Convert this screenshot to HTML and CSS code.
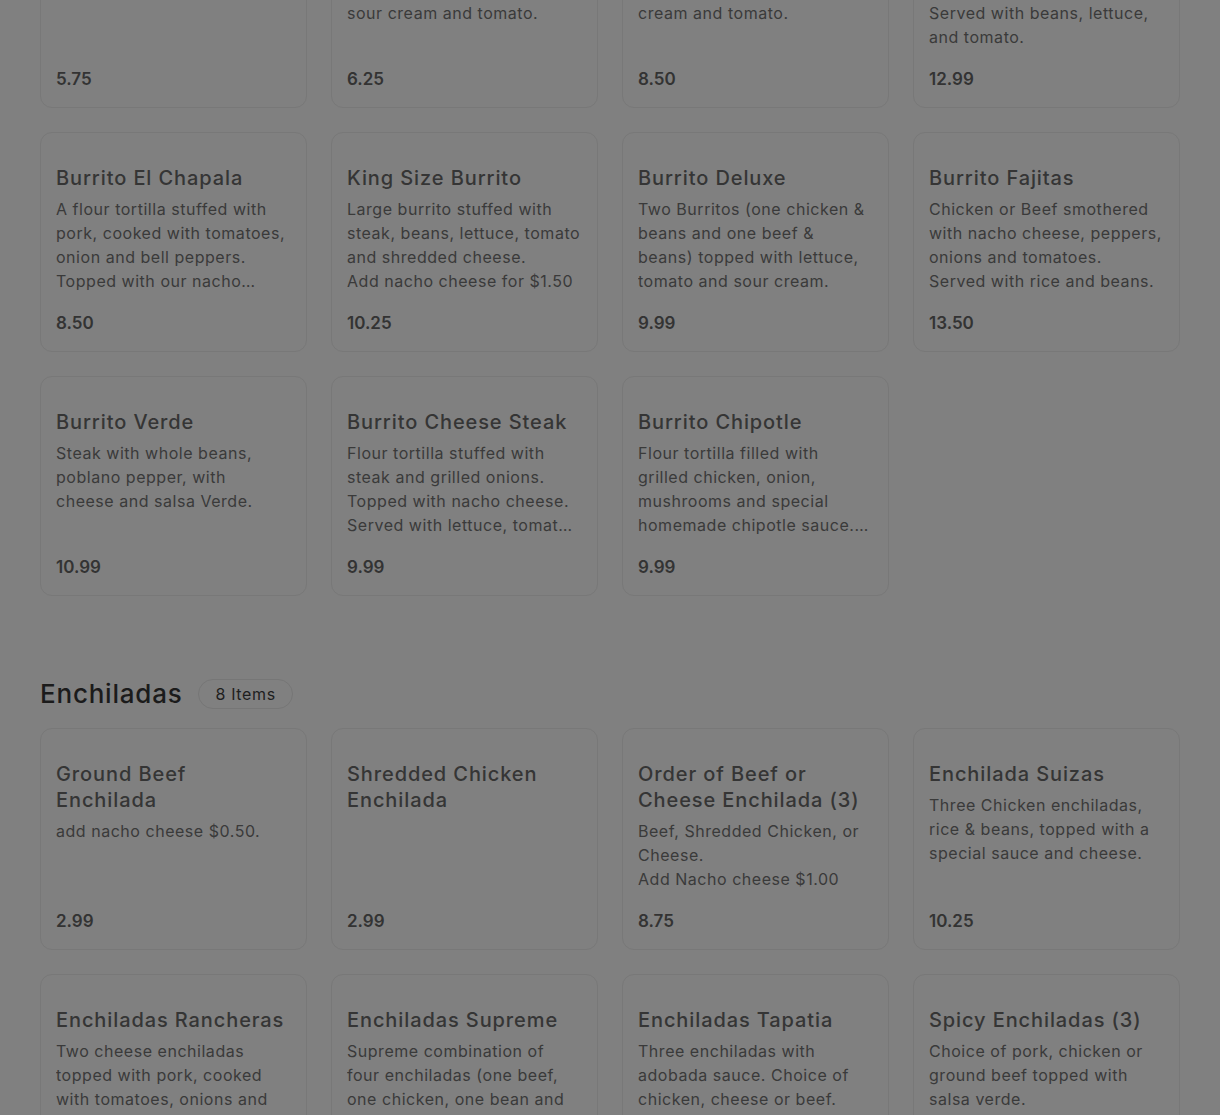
FILE: index.html
```html
<!DOCTYPE html>
<html lang="en">
<head>
<meta charset="utf-8">
<title>Menu</title>
<link rel="stylesheet" href="styles.css">
</head>
<body>
<main class="menu">
  <section class="section section-first">
    <div class="grid">
      <article class="card">
        <div class="card-body">
          <h3 class="item-title">Bean Burrito</h3>
          <p class="item-desc">Flour tortilla filled with<br>refried beans and cheese.</p>
        </div>
        <div class="item-price">5.75</div>
      </article>
      <article class="card">
        <div class="card-body">
          <h3 class="item-title">Burrito Supreme</h3>
          <p class="item-desc">Beef burrito topped with<br>cheese sauce, lettuce,<br>sour cream and tomato.</p>
        </div>
        <div class="item-price">6.25</div>
      </article>
      <article class="card">
        <div class="card-body">
          <h3 class="item-title">Burrito Mexicano</h3>
          <p class="item-desc">Steak burrito topped with<br>cheese sauce, lettuce, sour<br>cream and tomato.</p>
        </div>
        <div class="item-price">8.50</div>
      </article>
      <article class="card">
        <div class="card-body">
          <h3 class="item-title">Burrito Grande</h3>
          <p class="item-desc">Big burrito stuffed with<br>steak, chicken and rice.<br>Served with beans, lettuce,<br>and tomato.</p>
        </div>
        <div class="item-price">12.99</div>
      </article>

      <article class="card">
        <div class="card-body">
          <h3 class="item-title">Burrito El Chapala</h3>
          <p class="item-desc">A flour tortilla stuffed with pork, cooked with tomatoes, onion and bell peppers. Topped with our nacho cheese and served with rice.</p>
        </div>
        <div class="item-price">8.50</div>
      </article>
      <article class="card">
        <div class="card-body">
          <h3 class="item-title">King Size Burrito</h3>
          <p class="item-desc">Large burrito stuffed with steak, beans, lettuce, tomato and shredded cheese.<br>Add nacho cheese for $1.50</p>
        </div>
        <div class="item-price">10.25</div>
      </article>
      <article class="card">
        <div class="card-body">
          <h3 class="item-title">Burrito Deluxe</h3>
          <p class="item-desc">Two Burritos (one chicken &amp; beans and one beef &amp; beans) topped with lettuce, tomato and sour cream.</p>
        </div>
        <div class="item-price">9.99</div>
      </article>
      <article class="card">
        <div class="card-body">
          <h3 class="item-title">Burrito Fajitas</h3>
          <p class="item-desc">Chicken or Beef smothered with nacho cheese, peppers, onions and tomatoes.<br>Served with rice and beans.</p>
        </div>
        <div class="item-price">13.50</div>
      </article>

      <article class="card">
        <div class="card-body">
          <h3 class="item-title">Burrito Verde</h3>
          <p class="item-desc">Steak with whole beans, poblano pepper, with<br>cheese and salsa Verde.</p>
        </div>
        <div class="item-price">10.99</div>
      </article>
      <article class="card">
        <div class="card-body">
          <h3 class="item-title">Burrito Cheese Steak</h3>
          <p class="item-desc">Flour tortilla stuffed with steak and grilled onions. Topped with nacho cheese. Served with lettuce, tomato and sour cream.</p>
        </div>
        <div class="item-price">9.99</div>
      </article>
      <article class="card">
        <div class="card-body">
          <h3 class="item-title">Burrito Chipotle</h3>
          <p class="item-desc">Flour tortilla filled with grilled chicken, onion, mushrooms and special homemade chipotle sauce. Topped with nacho cheese.</p>
        </div>
        <div class="item-price">9.99</div>
      </article>
    </div>
  </section>

  <section class="section">
    <header class="section-head">
      <h2 class="section-title">Enchiladas</h2>
      <span class="count-badge">8 Items</span>
    </header>
    <div class="grid">
      <article class="card">
        <div class="card-body">
          <h3 class="item-title">Ground Beef Enchilada</h3>
          <p class="item-desc clamp-3">add nacho cheese $0.50.</p>
        </div>
        <div class="item-price">2.99</div>
      </article>
      <article class="card">
        <div class="card-body">
          <h3 class="item-title">Shredded Chicken Enchilada</h3>
        </div>
        <div class="item-price">2.99</div>
      </article>
      <article class="card">
        <div class="card-body">
          <h3 class="item-title">Order of Beef or Cheese Enchilada (3)</h3>
          <p class="item-desc clamp-3">Beef, Shredded Chicken, or Cheese.<br>Add Nacho cheese $1.00</p>
        </div>
        <div class="item-price">8.75</div>
      </article>
      <article class="card">
        <div class="card-body">
          <h3 class="item-title">Enchilada Suizas</h3>
          <p class="item-desc">Three Chicken enchiladas, rice &amp; beans, topped with a special sauce and cheese.</p>
        </div>
        <div class="item-price">10.25</div>
      </article>

      <article class="card">
        <div class="card-body">
          <h3 class="item-title">Enchiladas Rancheras</h3>
          <p class="item-desc">Two cheese enchiladas topped with pork, cooked with tomatoes, onions and bell peppers. Served with rice and beans.</p>
        </div>
        <div class="item-price">10.99</div>
      </article>
      <article class="card">
        <div class="card-body">
          <h3 class="item-title">Enchiladas Supreme</h3>
          <p class="item-desc">Supreme combination of<br>four enchiladas (one beef, one chicken, one bean and one cheese) topped with lettuce.</p>
        </div>
        <div class="item-price">10.50</div>
      </article>
      <article class="card">
        <div class="card-body">
          <h3 class="item-title">Enchiladas Tapatia</h3>
          <p class="item-desc">Three enchiladas with adobada sauce. Choice of chicken, cheese or beef.</p>
        </div>
        <div class="item-price">11.25</div>
      </article>
      <article class="card">
        <div class="card-body">
          <h3 class="item-title">Spicy Enchiladas (3)</h3>
          <p class="item-desc">Choice of pork, chicken or ground beef topped with salsa verde.</p>
        </div>
        <div class="item-price">10.99</div>
      </article>
    </div>
  </section>
</main>
</body>
</html>
```

FILE: styles.css
```css
html {
  overflow: hidden;
  background: #808080;
}

body {
  margin: 0;
  background: #808080;
  font-family: Inter, "Open Sans", "Liberation Sans", sans-serif;
  color: #383838;
}

.menu {
  padding: 0 40px;
}

.section-first {
  margin-top: -112px;
}

.section + .section {
  margin-top: 83px;
}

.section-head {
  display: flex;
  align-items: center;
  gap: 16px;
  height: 30px;
  margin-bottom: 19px;
}

.section-title {
  margin: 0;
  font-size: 26px;
  font-weight: 500;
  letter-spacing: 0.03em;
  color: #1b1b1b;
  line-height: 30px;
}

.count-badge {
  display: inline-flex;
  align-items: center;
  height: 28px;
  padding: 0 16px;
  border: 1px solid #767676;
  border-radius: 15px;
  font-size: 16px;
  letter-spacing: 0.04em;
  color: #1e1e1e;
}

.grid {
  display: grid;
  grid-template-columns: repeat(4, 1fr);
  gap: 24px;
}

.card {
  display: flex;
  flex-direction: column;
  padding: 32px 15px 16px;
  border: 1px solid #787878;
  border-radius: 12px;
  min-height: 220px;
  box-sizing: border-box;
}

.card-body {
  min-height: 128px;
}

.item-title {
  margin: 0 0 6px;
  font-size: 20px;
  font-weight: 500;
  line-height: 26px;
  letter-spacing: 0.045em;
  color: #353535;
}

.item-desc {
  margin: 0;
  font-size: 16px;
  line-height: 24px;
  letter-spacing: 0.033em;
  color: #3a3a3a;
  display: -webkit-box;
  -webkit-box-orient: vertical;
  -webkit-line-clamp: 4;
  overflow: hidden;
}

.item-desc.clamp-3 {
  -webkit-line-clamp: 3;
}

.item-price {
  margin-top: auto;
  padding-top: 18px;
  font-size: 17px;
  font-weight: 600;
  line-height: 24px;
  color: #333333;
}
```
